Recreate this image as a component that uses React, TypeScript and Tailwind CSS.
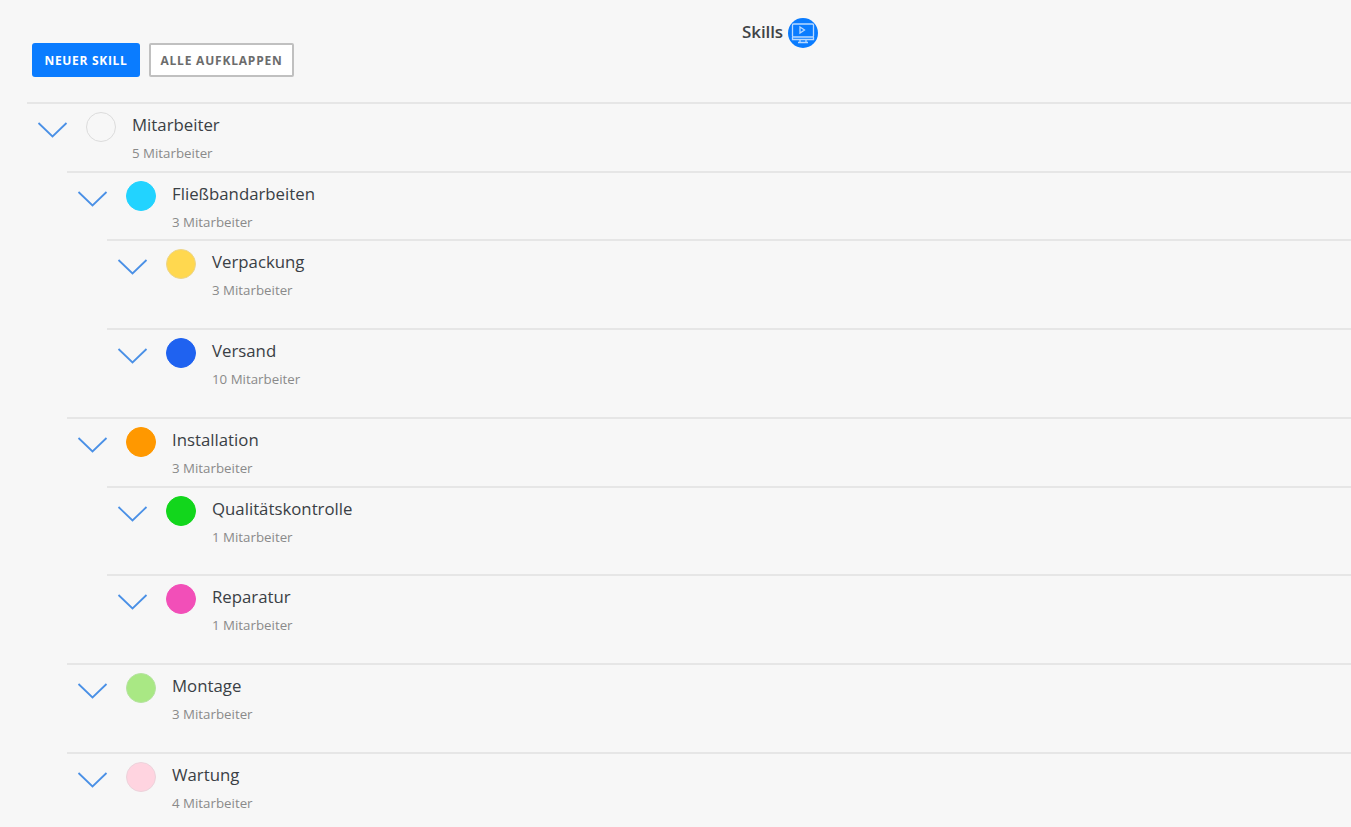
type Node = { name: string; count: string; color: string; ring: string; h: string; kids?: Node[] };
const tree: Node = {
  name: "Mitarbeiter", count: "5 Mitarbeiter", color: "bg-[#f7f7f7]", ring: "border-[#dcdcdc]", h: "h-[69px]",
  kids: [
    { name: "Fließbandarbeiten", count: "3 Mitarbeiter", color: "bg-[#22d3ff]", ring: "border-[#22d3ff]", h: "h-[68px]", kids: [
      { name: "Verpackung", count: "3 Mitarbeiter", color: "bg-[#ffd84f]", ring: "border-[#ecd58a]", h: "h-[89px]" },
      { name: "Versand", count: "10 Mitarbeiter", color: "bg-[#1f62f0]", ring: "border-[#1f62f0]", h: "h-[89px]" },
    ]},
    { name: "Installation", count: "3 Mitarbeiter", color: "bg-[#ff9800]", ring: "border-[#ff9800]", h: "h-[69px]", kids: [
      { name: "Qualitätskontrolle", count: "1 Mitarbeiter", color: "bg-[#12d61c]", ring: "border-[#12d61c]", h: "h-[88px]" },
      { name: "Reparatur", count: "1 Mitarbeiter", color: "bg-[#f24fb8]", ring: "border-[#f24fb8]", h: "h-[89px]" },
    ]},
    { name: "Montage", count: "3 Mitarbeiter", color: "bg-[#a9e884]", ring: "border-[#b5e3a0]", h: "h-[89px]" },
    { name: "Wartung", count: "4 Mitarbeiter", color: "bg-[#ffd4e0]", ring: "border-[#ecd3db]", h: "h-[74px]" },
  ],
};

function Row({ n }: { n: Node }) {
  return (
    <div className="ml-10 first:ml-0">
      <div className={`${n.h} flex border-t-2 border-[#e6e6e6] pl-[10px] overflow-hidden`}>
        <svg width="32" height="18" viewBox="0 0 32 18" fill="none" className="mt-[17px] shrink-0">
          <path d="M1.5 2 L15.5 15.5 L29.5 2" stroke="#4a90e6" strokeWidth="1.8" />
        </svg>
        <div className={`ml-[17px] mt-[8px] w-[30px] h-[30px] rounded-full border shrink-0 ${n.color} ${n.ring}`} />
        <div className="ml-4 pt-[9px]">
          <div className="text-[16.8px] leading-6 text-[#3a4045]">{n.name}</div>
          <div className="text-[13.3px] leading-[18px] mt-[7px] text-[#8a8a8a]">{n.count}</div>
        </div>
      </div>
      {n.kids?.map((k) => <Row key={k.name} n={k} />)}
    </div>
  );
}

export default function App() {
  return (
    <div className="h-[827px] overflow-hidden bg-[#f7f7f7] font-['Open_Sans','Noto_Sans',sans-serif]">
      <div className="relative h-[102px] pl-8 pt-[43px]">
        <div className="absolute left-[742px] top-[18px] flex items-center gap-[5px]">
          <span className="-mt-[2px] text-[17px] font-semibold tracking-[-0.1px] text-[#3f4447]">Skills</span>
          <span className="flex h-[30px] w-[30px] items-center justify-center rounded-full bg-[#0a7cff]">
            <svg width="24" height="22" viewBox="0 0 24 22" fill="none" stroke="#b9d9ff" strokeWidth="1.3">
              <rect x="1.5" y="2" width="21" height="13" rx="1" />
              <path d="M9 5 L13.5 8 L9 11 Z" />
              <path d="M1.5 15 V17.5 H22.5 V15" />
              <path d="M9 17.5 V20 M15 17.5 V20 M7 20.5 H17" />
            </svg>
          </span>
        </div>
        <div className="flex gap-[9px]">
          <button className="h-[34px] w-[108px] rounded-[3px] bg-[#0a7cff] pt-px text-xs font-bold tracking-[0.7px] text-white">NEUER SKILL</button>
          <button className="h-[34px] w-[145px] rounded-[2px] border-2 border-[#c0c0c0] bg-white pt-px text-xs font-bold tracking-[0.8px] text-[#6c6c6c]">ALLE AUFKLAPPEN</button>
        </div>
      </div>
      <div className="ml-[27px]">
        <Row n={tree} />
      </div>
    </div>
  );
}
